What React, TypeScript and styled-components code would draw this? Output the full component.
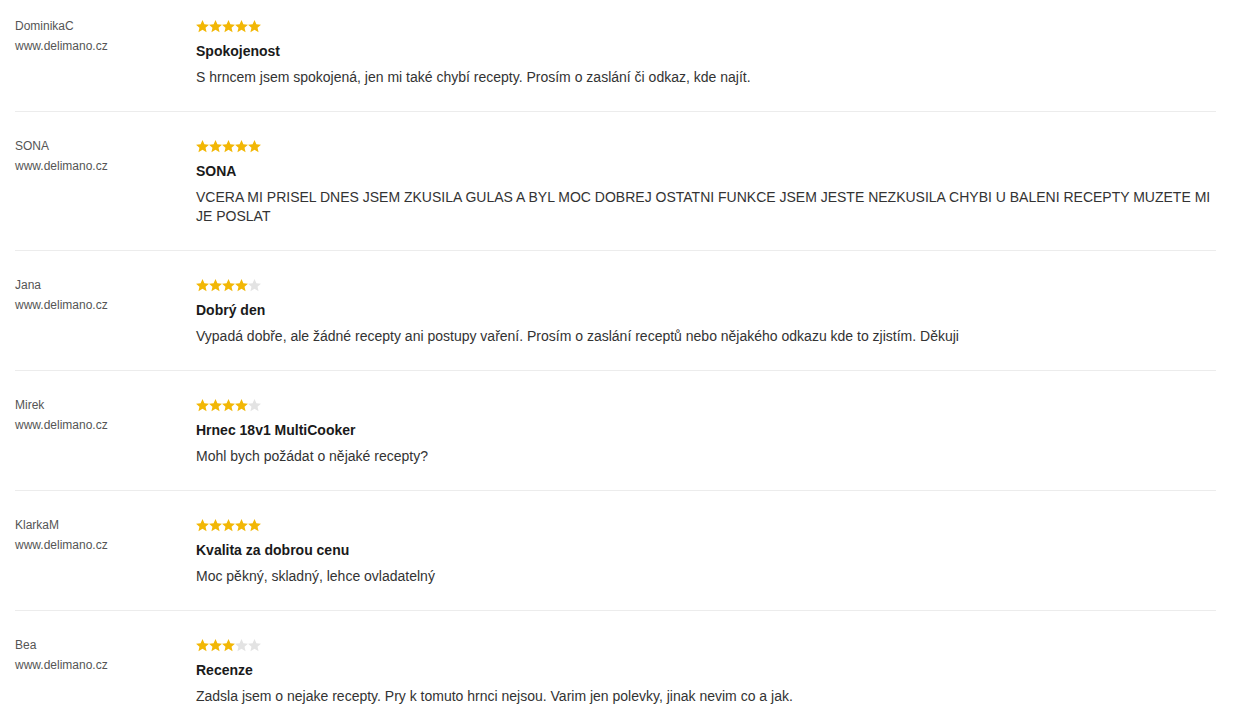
import React from 'react';
import styled, { createGlobalStyle } from 'styled-components';

const GlobalStyle = createGlobalStyle`
  body {
    margin: 0;
    background: #fff;
    font-family: "Liberation Sans", Arial, sans-serif;
  }
`;

const List = styled.div`
  padding: 0 19px 0 15px;
`;

const Row = styled.div`
  display: flex;
  align-items: flex-start;
  padding: 23px 0 24px;
  border-bottom: 1px solid #ececec;

  &:first-child {
    padding-top: 15px;
  }
`;

const Author = styled.div`
  width: 181px;
  flex-shrink: 0;
  padding-top: 1px;
  font-size: 12px;
  line-height: 20px;
  color: #555;
`;

const Body = styled.div`
  flex: 1;
  padding-top: 5px;
`;

const Stars = styled.div`
  display: flex;
  height: 13px;
  margin-bottom: 8px;
`;

const Title = styled.div`
  font-size: 14px;
  font-weight: bold;
  line-height: 20px;
  color: #1a1a1a;
  margin-bottom: 7px;
`;

const Text = styled.div`
  font-size: 14px;
  line-height: 19px;
  color: #333;
`;

const Star: React.FC<{ filled: boolean }> = ({ filled }) => (
  <svg width="13" height="13" viewBox="0 0 24 24">
    <path
      d="M12 0.2l3.5 7.6 8.4.8-6.3 5.6 1.9 8.3L12 18.2l-7.5 4.3 1.9-8.3L0.1 8.6l8.4-.8z"
      fill={filled ? '#f2b705' : '#e3e3e3'}
    />
  </svg>
);

const reviews = [
  {
    name: 'DominikaC',
    rating: 5,
    title: 'Spokojenost',
    text: 'S hrncem jsem spokojená, jen mi také chybí recepty. Prosím o zaslání či odkaz, kde najít.',
  },
  {
    name: 'SONA',
    rating: 5,
    title: 'SONA',
    text: 'VCERA MI PRISEL DNES JSEM ZKUSILA GULAS A BYL MOC DOBREJ OSTATNI FUNKCE JSEM JESTE NEZKUSILA CHYBI U BALENI RECEPTY MUZETE MI JE POSLAT',
  },
  {
    name: 'Jana',
    rating: 4,
    title: 'Dobrý den',
    text: 'Vypadá dobře, ale žádné recepty ani postupy vaření. Prosím o zaslání receptů nebo nějakého odkazu kde to zjistím. Děkuji',
  },
  {
    name: 'Mirek',
    rating: 4,
    title: 'Hrnec 18v1 MultiCooker',
    text: 'Mohl bych požádat o nějaké recepty?',
  },
  {
    name: 'KlarkaM',
    rating: 5,
    title: 'Kvalita za dobrou cenu',
    text: 'Moc pěkný, skladný, lehce ovladatelný',
  },
  {
    name: 'Bea',
    rating: 3,
    title: 'Recenze',
    text: 'Zadsla jsem o nejake recepty. Pry k tomuto hrnci nejsou. Varim jen polevky, jinak nevim co a jak.',
  },
];

export default function App() {
  return (
    <>
      <GlobalStyle />
      <List>
        {reviews.map((r, i) => (
          <Row key={i}>
            <Author>
              <div>{r.name}</div>
              <div>www.delimano.cz</div>
            </Author>
            <Body>
              <Stars>
                {[1, 2, 3, 4, 5].map((n) => (
                  <Star key={n} filled={n <= r.rating} />
                ))}
              </Stars>
              <Title>{r.title}</Title>
              <Text>{r.text}</Text>
            </Body>
          </Row>
        ))}
      </List>
    </>
  );
}
